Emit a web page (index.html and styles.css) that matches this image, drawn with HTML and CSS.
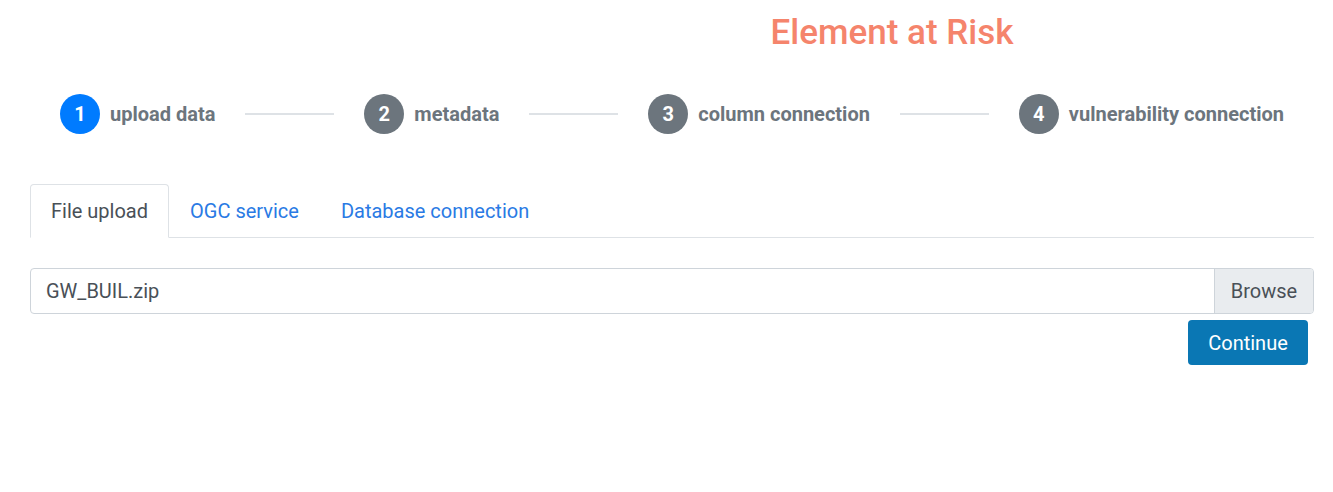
FILE: index.html
```html
<!DOCTYPE html>
<html lang="en">
<head>
<meta charset="utf-8">
<title>Element at Risk</title>
<link rel="stylesheet" href="styles.css">
</head>
<body>
<div class="page">
  <h1 class="title">Element at Risk</h1>
  <div class="stepper">
    <div class="step active"><span class="num">1</span><span class="label">upload data</span></div>
    <div class="line"></div>
    <div class="step"><span class="num">2</span><span class="label">metadata</span></div>
    <div class="line"></div>
    <div class="step"><span class="num">3</span><span class="label">column connection</span></div>
    <div class="line"></div>
    <div class="step"><span class="num">4</span><span class="label">vulnerability connection</span></div>
  </div>
  <ul class="tabs">
    <li class="tab active">File upload</li>
    <li class="tab">OGC service</li>
    <li class="tab">Database connection</li>
  </ul>
  <div class="input-group">
    <div class="file-name">GW_BUIL.zip</div>
    <div class="browse">Browse</div>
  </div>
  <div class="actions">
    <button class="btn">Continue</button>
  </div>
</div>
</body>
</html>
```
FILE: styles.css
```css
* { box-sizing: border-box; }
body {
  margin: 0;
  background: #fff;
  font-family: Roboto, "Liberation Sans", sans-serif;
  color: #495057;
}
.page {
  padding: 0 19px 0 30px;
}
.title {
  margin: 0;
  padding: 12px 0 0 440px;
  height: 62px;
  text-align: center;
  font-size: 35px;
  font-weight: 500;
  line-height: 42px;
  color: #f5846c;
}
.stepper {
  display: flex;
  align-items: center;
  padding: 1px 30px 0;
  height: 102px;
}
.step {
  display: flex;
  align-items: center;
  gap: 10px;
}
.num {
  width: 40px;
  height: 40px;
  border-radius: 50%;
  background: #6c757d;
  color: #fff;
  font-weight: 700;
  font-size: 20px;
  display: flex;
  align-items: center;
  justify-content: center;
}
.step.active .num { background: #007bff; }
.label {
  font-size: 20px;
  font-weight: 700;
  color: #6c757d;
}
.line {
  flex: 1;
  height: 2px;
  background: #dee2e6;
  margin: 0 30px;
}
.tabs {
  list-style: none;
  margin: 20px 0 0 0;
  padding: 0;
  display: flex;
  border-bottom: 1px solid #dee2e6;
}
.tab {
  padding: 11px 20px;
  font-size: 20px;
  line-height: 30px;
  color: #2a7ae4;
  border: 1px solid transparent;
  border-top-left-radius: 4px;
  border-top-right-radius: 4px;
  margin-bottom: -1px;
}
.tab.active {
  color: #495057;
  border-color: #dee2e6 #dee2e6 #fff;
  background: #fff;
}
.input-group {
  display: flex;
  margin-top: 30px;
  height: 46px;
  border: 1px solid #ced4da;
  border-radius: 4px;
  overflow: hidden;
  font-size: 20px;
}
.file-name {
  flex: 1;
  padding: 0 15px;
  display: flex;
  align-items: center;
  color: #495057;
}
.browse {
  width: 99px;
  background: #e9ecef;
  border-left: 1px solid #ced4da;
  display: flex;
  align-items: center;
  justify-content: center;
  color: #495057;
}
.actions {
  display: flex;
  justify-content: flex-end;
  padding: 6px 6px 0 0;
}
.btn {
  width: 120px;
  height: 45px;
  border: none;
  border-radius: 4px;
  background: #0a77b4;
  color: #fff;
  font-family: Roboto, "Liberation Sans", sans-serif;
  font-size: 20px;
}
```
